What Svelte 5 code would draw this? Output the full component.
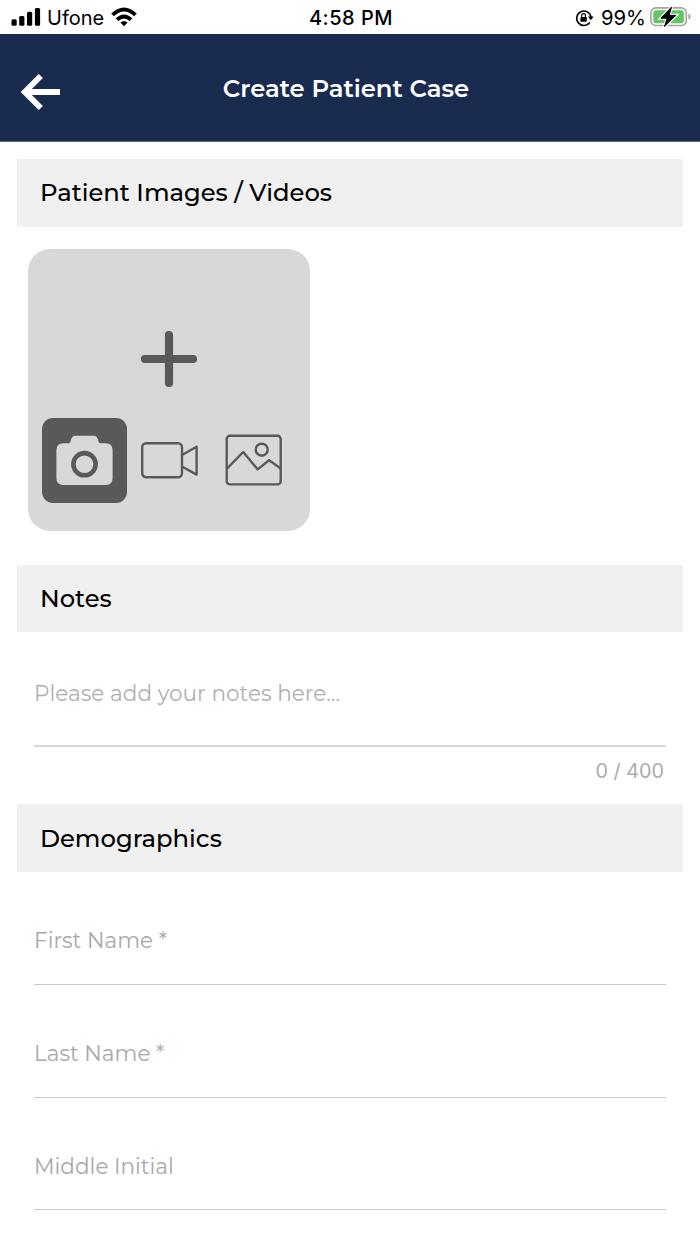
<script>
  const fields = [
    { id: 'first', label: 'First Name *' },
    { id: 'last', label: 'Last Name *' },
    { id: 'middle', label: 'Middle Initial' }
  ]

  const max_notes = 400
  let notes = $state('')
  let media = $state('photo')
</script>

<div class="screen">
  <div class="status-bar">
    <div class="status-left">
      <svg class="signal" width="30" height="20" viewBox="0 0 30 20">
        <rect x="0.5" y="12.2" width="5.2" height="6.5" rx="1.5" />
        <rect x="8.2" y="9" width="5.2" height="9.7" rx="1.5" />
        <rect x="16" y="4.8" width="5.2" height="13.9" rx="1.5" />
        <rect x="23.9" y="0.9" width="5.2" height="17.8" rx="1.5" />
      </svg>
      <span class="carrier">Ufone</span>
      <svg class="wifi" width="26" height="20" viewBox="0 0 26 20">
        <path d="M1.5 7.9Q13 -2.9 24.5 7.9" />
        <path d="M6 12.6Q13 6.2 20 12.6" />
        <path class="dot" d="M9.4 15.6Q13 12.6 16.6 15.6L13 19.2Z" />
      </svg>
    </div>
    <span class="clock">4:58 PM</span>
    <div class="status-right">
      <svg class="lock" width="20" height="20" viewBox="0 0 20 20">
        <path d="M15.8 14.4A7.2 7.2 0 1 1 17 9" fill="none" stroke="#000" stroke-width="1.6" />
        <path d="M14 8.6h5.6l-2.8 3.7z" />
        <rect x="6.4" y="9" width="6.4" height="4.8" rx="0.8" />
        <path d="M7.7 9V7.6a1.9 1.9 0 0 1 3.8 0V9" fill="none" stroke="#000" stroke-width="1.2" />
      </svg>
      <span class="percent">99%</span>
      <svg class="battery" width="42" height="22" viewBox="0 0 42 22">
        <rect x="0.9" y="1.9" width="35.4" height="17.6" rx="5" fill="#fff" stroke="#a3a3a3" stroke-width="1.6" />
        <rect x="3.3" y="4.2" width="30.6" height="13" rx="2.8" fill="#65c466" />
        <path d="M38.4 7.6q2.2 1 2.2 3.1t-2.2 3.1z" fill="#a3a3a3" />
        <path
          d="M21.6 1 10.8 12.2h6.4L14.4 20.6 26 9.3h-6.8z"
          fill="#000"
          stroke="#fff"
          stroke-width="3"
          paint-order="stroke"
        />
        <path d="M21.6 1 10.8 12.2h6.4L14.4 20.6 26 9.3h-6.8z" stroke="#000" stroke-width="0.8" stroke-linejoin="round" />
      </svg>
    </div>
  </div>

  <header class="header">
    <button class="back" aria-label="Back">
      <svg width="40" height="36" viewBox="0 0 40 36">
        <path d="M20.8 2 4.8 18l16 16M5 18h35" fill="none" stroke="#fff" stroke-width="5.8" />
      </svg>
    </button>
    <h1>Create Patient Case</h1>
  </header>

  <main>
    <h2 class="images-title">Patient Images / Videos</h2>
    <div class="tile">
      <svg class="plus" width="58" height="58" viewBox="0 0 58 58">
        <path d="M29 5v48M5 29h48" fill="none" stroke="#595959" stroke-width="8.2" stroke-linecap="round" />
      </svg>
      <div class="media-row">
        <button class:active={media === 'photo'} onclick={() => (media = 'photo')} aria-label="Photo">
          <svg width="58" height="52" viewBox="-0.5 0 58 52">
            <path
              d="M7.8 9.3H13q1.8 0 2.2-2.2Q16 1.8 20 1.8h18q4 0 4.8 5.3Q43.2 9.3 45 9.3h5.2q6.9 0 6.9 7v27.8q0 7-6.9 7H7.8q-6.9 0-6.9-7V16.3q0-7 6.9-7z"
              fill="#d8d8d8"
            />
            <circle cx="29" cy="30.2" r="11.1" fill="none" stroke="#595959" stroke-width="4.6" />
          </svg>
        </button>
        <button class:active={media === 'video'} onclick={() => (media = 'video')} aria-label="Video">
          <svg class="line" width="58" height="52" viewBox="-0.4 0 58 52">
            <rect x="1.8" y="9.3" width="39.8" height="34" rx="4" />
            <path d="M42 20.7 56.2 12.7v27.9L42 32.7" />
          </svg>
        </button>
        <button class:active={media === 'gallery'} onclick={() => (media = 'gallery')} aria-label="Gallery">
          <svg class="line" width="58" height="52" viewBox="0 0 58 52">
            <rect x="1.7" y="1.8" width="54" height="48.6" rx="3.2" />
            <circle cx="36.7" cy="15.7" r="6" />
            <path d="M2.2 34.3 18.2 18l14.5 17.4 11.4-9.2 11.6 8.3" />
          </svg>
        </button>
      </div>
    </div>

    <h2 class="notes-title">Notes</h2>
    <div class="notes"><span class="notes-hint">Please add your notes here...</span></div>
    <div class="counter">{notes.length} / {max_notes}</div>

    <h2 class="demo-title">Demographics</h2>
    {#each fields as field (field.id)}
      <div class="field {field.id}"><span>{field.label}</span></div>
    {/each}
  </main>
</div>

<style>
  :global(body) {
    margin: 0;
    background: #fff;
  }

  .screen {
    width: 700px;
    height: 1244px;
    overflow: hidden;
    background: #fff;
    color: #000;
    font-family: Montserrat, Inter, 'Liberation Sans', sans-serif;
  }

  .status-bar {
    display: grid;
    grid-template-columns: 1fr auto 1fr;
    align-items: start;
    height: 34px;
    padding: 0 9px 0 11px;
    box-sizing: border-box;
    font-family: Inter, sans-serif;
    font-size: 20px;
    line-height: 34px;
  }

  .status-left,
  .status-right {
    display: flex;
    align-items: center;
    height: 34px;
  }

  .status-right {
    justify-content: flex-end;
    margin-right: -1px;
  }

  .carrier {
    margin: 1px 7px 0 6px;
  }

  .wifi path {
    fill: none;
    stroke: #000;
    stroke-width: 3.8;
  }

  .wifi .dot {
    fill: #000;
    stroke: none;
  }

  .clock {
    padding-top: 1px;
    font-weight: 500;
    letter-spacing: 0.5px;
  }

  .percent {
    margin: 1px 4px 0 7px;
    font-size: 20.3px;
  }

  .lock {
    margin-top: 1px;
  }

  .signal,
  .wifi,
  .battery {
    margin-bottom: 1px;
  }

  .header {
    display: grid;
    grid-template-columns: 60px 1fr 68px;
    align-items: center;
    height: 108px;
    background: #1a2b50;
    border-bottom: 1px solid #5e6b86;
    box-sizing: border-box;
  }

  button {
    padding: 0;
    border: 0;
    background: none;
    cursor: pointer;
  }

  .back {
    display: flex;
    justify-content: flex-end;
    padding-top: 8px;
  }

  h1 {
    margin: 0;
    color: #fff;
    font-size: 24.3px;
    font-weight: 600;
    line-height: 30px;
    text-align: center;
    white-space: nowrap;
  }

  main {
    padding: 17px 17px 0;
  }

  h2 {
    height: 68px;
    margin: 0;
    padding-left: 23px;
    background: #f0f0f0;
    font-size: 24.25px;
    font-weight: 500;
    line-height: 68px;
    white-space: nowrap;
  }

  .tile {
    display: flex;
    flex-direction: column;
    align-items: center;
    width: 282px;
    height: 282px;
    margin: 22px 0 34px 11px;
    padding-top: 81px;
    box-sizing: border-box;
    border-radius: 22px;
    background: #d8d8d8;
  }

  .media-row {
    display: flex;
    margin-top: 30px;
  }

  .media-row button {
    display: flex;
    align-items: center;
    justify-content: center;
    width: 84.6px;
    height: 84.6px;
    border-radius: 11px;
  }

  .media-row .active {
    background: #595959;
  }

  .line {
    fill: none;
    stroke: #595959;
    stroke-width: 2.4;
    stroke-linejoin: round;
  }

  .notes-title {
    height: 67px;
    line-height: 67px;
  }

  .notes {
    height: 115px;
    margin: 0 17px;
    padding-top: 46px;
    box-sizing: border-box;
    border-bottom: 2px solid #d6d6d6;
    color: #b0b0b0;
    font-size: 21.6px;
    line-height: 30px;
  }

  .counter {
    height: 57px;
    padding: 9px 19px 0 0;
    box-sizing: border-box;
    color: #acacac;
    font-family: Inter, sans-serif;
    font-size: 19.8px;
    line-height: 30px;
    text-align: right;
  }

  .demo-title {
    line-height: 69px;
  }

  .field {
    height: 113px;
    margin: 0 17px;
    padding-top: 53px;
    box-sizing: border-box;
    border-bottom: 1px solid #c8c8c8;
    color: #a8a8a8;
    font-size: 21.55px;
    line-height: 30px;
  }

  .middle {
    height: 112px;
  }
</style>
